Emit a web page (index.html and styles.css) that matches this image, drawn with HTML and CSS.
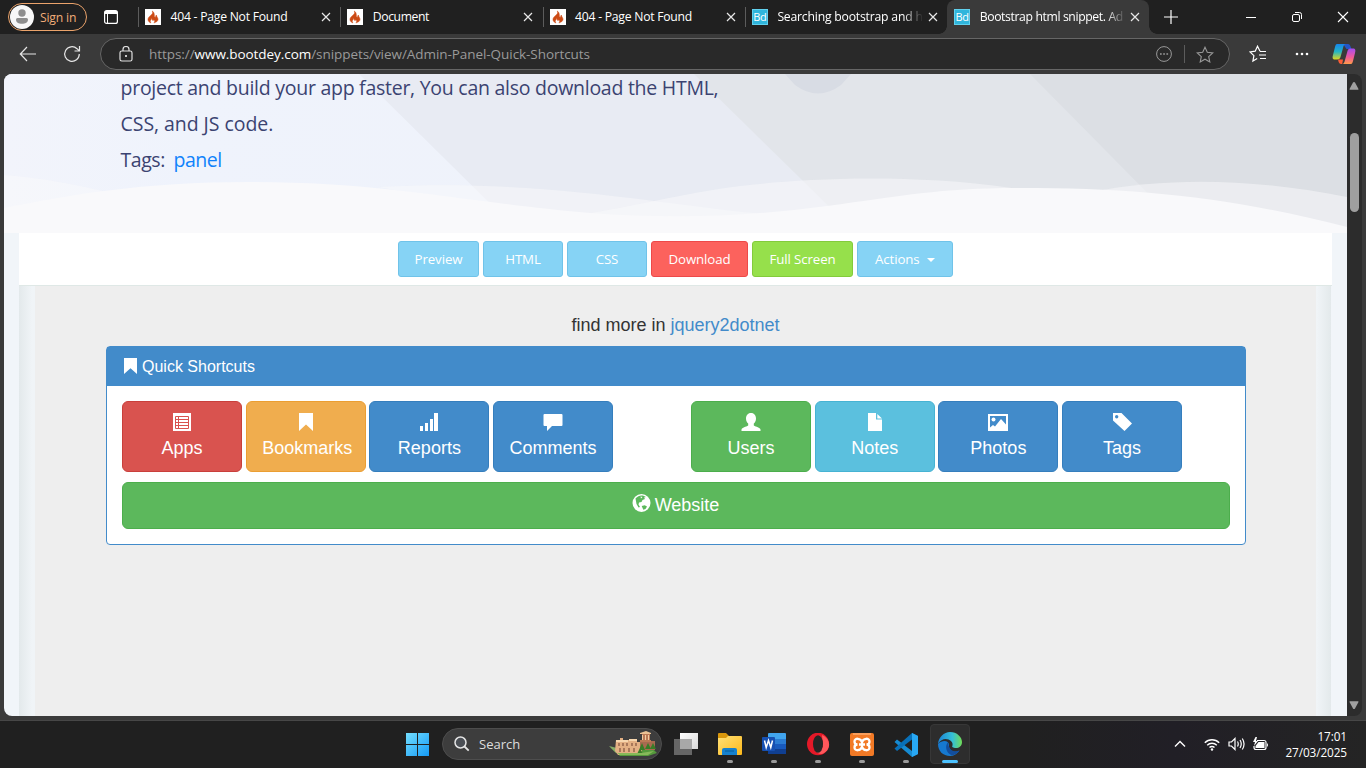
FILE: index.html
```html
<!DOCTYPE html>
<html lang="en">
<head>
<meta charset="utf-8">
<title>Bootstrap html snippet. Admin Panel Quick Shortcuts</title>
<link rel="stylesheet" href="styles.css">
</head>
<body>
<svg class="defs" width="0" height="0">
  <symbol id="flame" viewBox="0 0 16 16"><rect width="16" height="16" fill="#fff"/><path d="M7.300 2c.8 1.800.2 3-1.400 4.200C4 7.700 2.700 9.300 3 11c.3 1.500 1.500 2.500 3 2.900-.8-.8-1-2-.2-2.900.5-.6.700-1 .7-1.700.9.800.6 1.700 1.100 2.100.6.400 1.300-.2 1.100-1 1.200 1 1.300 2.500.2 3.500 2-.4 3.900-1.600 4.100-3.300.2-1.600-1.300-2.600-1.700-4.600-.6.600-.5 1.500-.7 1.900-.4.500-1.100.3-1.200-.4C9.200 5.600 9.700 3.600 7.300 2z" fill="#cc4a14" stroke="#cc4a14" stroke-width=".5"/></symbol>
  <symbol id="close" viewBox="0 0 10 10"><path d="M1 1l8 8M9 1L1 9" stroke="#e8e8e8" stroke-width="1.200"/></symbol>
  <symbol id="bookmark" viewBox="0 0 14 18"><path d="M0 0h14v18l-7-6.500L0 18z" fill="#fff"/></symbol>
</svg>

<header class="tabs">
  <div class="profile"><svg width="24" height="24" viewBox="0 0 24 24"><circle cx="12" cy="12" r="12" fill="#f7f7f7"/><circle cx="12" cy="8" r="3.700" fill="#8d8d8d"/><path d="M6 14.500q0-1.500 1.500-1.500h9q1.500 0 1.500 1.500c0 3-2.700 4.300-6 4.300s-6-1.300-6-4.300z" fill="#8d8d8d"/></svg><span>Sign in</span></div>
  <svg class="tab-actions" width="16" height="16" viewBox="0 0 16 16"><rect x="1.600" y="1.600" width="12.800" height="12.800" rx="2" fill="none" stroke="#fff" stroke-width="1.200"/><path d="M2 2h12v3H2z" fill="#fff"/><path d="M4.500 4v10" stroke="#fff"/></svg>
  <div class="tab"><svg class="fav"><use href="#flame"/></svg><span class="title t404">404 - Page Not Found</span><svg class="x"><use href="#close"/></svg></div>
  <div class="tab"><svg class="fav"><use href="#flame"/></svg><span class="title tdoc">Document</span><svg class="x"><use href="#close"/></svg></div>
  <div class="tab"><svg class="fav"><use href="#flame"/></svg><span class="title t404">404 - Page Not Found</span><svg class="x"><use href="#close"/></svg></div>
  <div class="tab"><b class="fav bd">Bd</b><span class="title fade">Searching bootstrap and h</span><svg class="x"><use href="#close"/></svg></div>
  <div class="tab active"><b class="fav bd">Bd</b><span class="title fade last">Bootstrap html snippet. Ad</span><svg class="x"><use href="#close"/></svg></div>
  <svg class="plus" width="16" height="16" viewBox="0 0 16 16"><path d="M8 1v14M1 8h14" stroke="#fff" stroke-width="1.200"/></svg>
  <div class="window">
    <svg width="12" height="12" viewBox="0 0 12 12"><path d="M1 6.500h10" stroke="#fff"/></svg>
    <svg width="12" height="12" viewBox="0 0 12 12"><rect x="1.500" y="3.500" width="7" height="7" rx="1.500" fill="none" stroke="#fff"/><path d="M4 1.500h4.500a2 2 0 0 1 2 2V8" fill="none" stroke="#fff"/></svg>
    <svg width="12" height="12" viewBox="0 0 12 12"><path d="M1 1l10 10M11 1L1 11" stroke="#fff" stroke-width="1.100"/></svg>
  </div>
</header>

<nav class="toolbar">
  <svg class="back" width="18" height="16" viewBox="0 0 18 16"><path d="M17 8H1.500M8 1L1.300 8 8 15" fill="none" stroke="#e6e6e6" stroke-width="1.200"/></svg>
  <svg class="reload" width="18" height="18" viewBox="0 0 18 18"><path d="M16.300 9A7.300 7.300 0 1 1 14 3.700l2 2M16.500 1v5H11.500" fill="none" stroke="#e6e6e6" stroke-width="1.200"/></svg>
  <div class="address">
    <svg width="14" height="16" viewBox="0 0 14 16"><rect x="1" y="5" width="12" height="10" rx="1.800" fill="none" stroke="#e0e0e0" stroke-width="1.200"/><path d="M4 5V3.500a3 3 0 0 1 6 0V5" fill="none" stroke="#e0e0e0" stroke-width="1.200"/><circle cx="7" cy="10" r="1" fill="#fff"/></svg>
    <span class="url">https://<em>www.bootdey.com</em>/snippets/view/Admin-Panel-Quick-Shortcuts</span>
    <svg class="dots" width="16" height="16" viewBox="0 0 16 16"><circle cx="8" cy="8" r="7.400" fill="none" stroke="#999"/><path d="M4 7.300h1.700v1.500H4zM7.200 7.300h1.700v1.500H7.200zM10.400 7.300h1.700v1.500h-1.700z" fill="#999"/></svg>
    <i></i>
    <svg width="18" height="17" viewBox="0 0 18 17"><path d="M9 1.200l2.300 5 5.500.7-4.100 3.700 1.100 5.300L9 13.200l-4.800 2.700 1.100-5.300-4.100-3.700 5.500-.7z" fill="none" stroke="#999" stroke-width="1.100"/></svg>
  </div>
  <svg class="favs" width="18" height="18" viewBox="0 0 18 18"><path d="M11 6.300L8.500 1.200l-2.300 5-5.200.700 3.900 3.700-1 5.500 4.300-2.500M11 6.500h6M10 10h7M11 13.500h6" fill="none" stroke="#fff" stroke-width="1.200"/></svg>
  <svg class="more" width="14" height="4" viewBox="0 0 14 4"><circle cx="2" cy="2" r="1.300" fill="#fff"/><circle cx="7" cy="2" r="1.300" fill="#fff"/><circle cx="12" cy="2" r="1.300" fill="#fff"/></svg>
  <svg class="copilot" width="24" height="22" viewBox="0 0 24 22">
    <defs><linearGradient id="cp1" x1="0" y1="0" x2="0" y2="1"><stop offset="0" stop-color="#1685ed"/><stop offset=".5" stop-color="#25b5c3"/><stop offset="1" stop-color="#e2d51d"/></linearGradient><linearGradient id="cp2" x1="0" y1="0" x2="0" y2="1"><stop offset="0" stop-color="#a44cf0"/><stop offset=".55" stop-color="#ef599b"/><stop offset="1" stop-color="#ff9b48"/></linearGradient></defs>
    <path d="M11 1h5c1.500 0 2 1 2.500 2.500L19.500 6h-5z" fill="#2456c8"/><path d="M5 1h9c-2 0-2.500 2-3 4L8.500 14c-.5 1.500-1.200 2.500-3 2.500H3C.5 16.500.2 14.500 1 12L3 4c.5-2 1-3 2-3z" fill="url(#cp1)"/>
    <path d="M6 16.500h5l-.8 4.500H9c-1.500 0-2-1-2.500-2.500z" fill="#fc5d37"/><path d="M19 21h-9c2 0 2.500-2 3-4l2.500-9c.5-1.500 1.200-2.500 3-2.500H21c2.500 0 2.800 2 2 4.500L21 18c-.5 2-1 3-2 3z" fill="url(#cp2)"/>
  </svg>
</nav>

<main class="viewport">
  <section class="page">
    <div class="hero">
      <svg class="hero-bg" width="1343" height="160" viewBox="4 74 1343 160">
        <defs><linearGradient id="h1"><stop offset="0" stop-color="#f2f4fb"/><stop offset=".14" stop-color="#eff3fc"/><stop offset="1" stop-color="#eff1f7"/></linearGradient></defs>
        <path d="M4 74h1343v160H4z" fill="url(#h1)"/>
        <path d="M359 74h988v160H521z" fill="#e8ebf3"/>
        <path d="M694 74h653v160H857z" fill="#e2e5ea"/>
        <path d="M1030 74h317v160h-159z" fill="#dcdfe4"/>
        <path d="M785 74l10 11q23 17 46 0l10-11z" fill="#d8dce4"/>
        <path d="M4 175C45 178 75 185 108 192L140 215 4 230z" fill="#f9f9fb" fill-opacity=".5"/>
        <path d="M378 187C480 182 560 189 654 201S730 211 790 216L590 225z" fill="#f9f9fb" fill-opacity=".5"/>
        <path d="M580 215C650 203 690 192 740 186S900 172 1012 188L1019 230H580z" fill="#f9f9fb" fill-opacity=".5"/>
        <path d="M1090 192C1170 177 1250 178 1347 197v36h-243z" fill="#f9f9fb" fill-opacity=".5"/>
        <path d="M4 208C70 195 140 182 250 182c140 0 210 20 340 31 80 6 155 4 237-7 75-10 112-18 192-18 120 0 210 9 328 39v7H4z" fill="#f9f9fb"/>
      </svg>
      <div class="hero-text">
        <p class="l1">project and build your app faster, You can also download the HTML,</p>
        <p class="l2">CSS, and JS code.</p>
        <p class="l3">Tags: <a>panel</a></p>
      </div>
    </div>
    <div class="snippet">
      <div class="btnbar">
        <span class="w81">Preview</span><span class="w80">HTML</span><span class="w80">CSS</span><span class="w97 red">Download</span><span class="w101 lime">Full Screen</span><span class="w96">Actions <i class="caret"></i></span>
      </div>
      <div class="preview">
        <div class="frame">
          <h4>find more in <a>jquery2dotnet</a></h4>
          <div class="panel">
            <div class="panel-heading"><svg width="13" height="16" viewBox="0 0 14 18" preserveAspectRatio="none"><use href="#bookmark" width="14" height="18"/></svg><span>Quick Shortcuts</span></div>
            <div class="panel-body">
              <div class="row">
                <div class="col">
                  <div class="btn danger"><svg width="18" height="18" viewBox="0 0 18 18"><path d="M0 0h18v18H0z" fill="#fff"/><path d="M2.500 3.500h13v12h-13zM2.500 6.500h13M2.500 9.500h13M2.500 12.500h13M5.500 3v13" stroke="#d9534f" fill="none"/></svg><span>Apps</span></div>
                  <div class="btn warning"><svg width="14" height="18"><use href="#bookmark"/></svg><span class="wide">Bookmarks</span></div>
                  <div class="btn primary"><svg width="18" height="18" viewBox="0 0 18 18"><path d="M0 13h3v5H0zM5 10h3v8H5zM10 6h3v12h-3zM14 0h4v18h-4z" fill="#fff"/></svg><span>Reports</span></div>
                  <div class="btn primary"><svg width="20" height="18" viewBox="0 0 20 18"><path d="M1.500 1h17q1 0 1 1v10q0 1-1 1H9l-5 5v-5H1.500q-1 0-1-1V2q0-1 1-1z" fill="#fff"/></svg><span>Comments</span></div>
                </div>
                <div class="col">
                  <div class="btn success"><svg width="20" height="18" viewBox="0 0 20 18"><path d="M10 0c3.300 0 5 2.500 5 5.500 0 2.500-1 4-2.200 5v2c2.200 1.300 6.200 2 6.700 4V18H.5v-1.500c.5-2 4.500-2.700 6.700-4v-2C6 9.500 5 8 5 5.500 5 2.500 6.700 0 10 0z" fill="#fff"/></svg><span>Users</span></div>
                  <div class="btn info"><svg width="14" height="18" viewBox="0 0 14 18"><path d="M0 0h8v6.500h6V18H0zM9.300 1l4.700 4.500H9.300z" fill="#fff"/></svg><span>Notes</span></div>
                  <div class="btn primary"><svg width="20" height="18" viewBox="0 0 20 18"><path fill-rule="evenodd" d="M0 1h20v17H0zM2 3v11.500l3-2.500 2 1.500L13 6l5 5.500V3z" fill="#fff"/><circle cx="5.500" cy="6.500" r="2" fill="#fff"/></svg><span>Photos</span></div>
                  <div class="btn primary"><svg width="19" height="18" viewBox="0 0 19 18"><path fill-rule="evenodd" d="M0 0h8.500L19 10.500 11.500 18 0 7.500zM3.700 2a1.700 1.700 0 1 0 0 3.400 1.700 1.700 0 0 0 0-3.400z" fill="#fff"/></svg><span>Tags</span></div>
                </div>
              </div>
              <div class="btn website success"><svg width="19" height="18" viewBox="0 0 19 18"><circle cx="9.500" cy="9" r="9" fill="#fff"/><path d="M3.500 4.500C6 1.500 9 1 11.500 1.700L14 3l-2 .5 1 1.500-2.500 1-1 2-2.500.500-.5 2 1.500 2.500-1.500.5-2-3.500z" fill="#5cb85c"/><path d="M9.700 12l3-.7 2.300 1.200-1.500 2.500-2.200.7z" fill="#5cb85c"/><path d="M8.500 2.500l2 .5-1.500 1.500z" fill="#fff"/></svg><span>Website</span></div>
            </div>
          </div>
        </div>
      </div>
    </div>
  </section>
  <aside class="scroll"><svg width="10" height="8" viewBox="0 0 10 8"><path d="M5 0q.7 0 1 .600L9.500 7q.2.800-.5.800H1Q.3 7.800.5 7L4 .600Q4.300 0 5 0z" fill="#a0a0a0"/></svg><b></b><svg class="down" width="10" height="8" viewBox="0 0 10 8"><path d="M5 8q-.7 0-1-.6L.5 1Q.3.200 1 .200h8q.7 0 .5.800L6 7.400Q5.700 8 5 8z" fill="#a0a0a0"/></svg></aside>
</main>

<footer class="taskbar">
  <svg class="start" width="23" height="23" viewBox="0 0 23 23"><defs><linearGradient id="win" x2="1" y2="1"><stop offset="0" stop-color="#73deff"/><stop offset="1" stop-color="#159af5"/></linearGradient></defs><path d="M0 0h11v11H0zM12 0h11v11H12zM0 12h11v11H0zM12 12h11v11H12z" fill="url(#win)"/></svg>
  <div class="search"><svg width="16" height="16" viewBox="0 0 16 16"><circle cx="6.500" cy="6.500" r="5.500" fill="#4b4f55" stroke="#e5e5e5" stroke-width="1.500"/><path d="M10.500 10.500L14.700 14.700" stroke="#e5e5e5" stroke-width="1.800"/></svg><span>Search</span>
    <svg width="48" height="26" viewBox="0 0 48 26">
      <path d="M1 16l7 2 15-1 22 2 3 3-9 3H11l-6-5z" fill="#559a3c"/><path d="M0 15l8 2-1 5z" fill="#86ab68"/>
      <path d="M7 9h4V7h3v2h6V8h8v3h5v13H9l-3-4z" fill="#e3b084"/><path d="M7 9h12v2H7zM20 8h8v2h-8z" fill="#f6d6ae"/>
      <path d="M10 12v3M14 12v3M18 12v3M23 12v3M27 12v3M11 17v4M15 17v4M20 17v4M25 17v4" stroke="#8a5b45" stroke-width="1.300"/>
      <path d="M31 10h15v9H31z" fill="#a86a50"/><path d="M33 2h8v8h-8zM31 9h11v2H31z" fill="#bb7a56"/><path d="M31 2l6-2 5 2v1H31z" fill="#ecc294"/><path d="M33.500 4v5M36.500 4v5M39.500 4v5" stroke="#f3cda2"/>
      <path d="M33 12l3 7h-6zM39 12l3 6h-6zM44 12l3 6h-6zM31 17l3 6h-6z" fill="#397c27"/><path d="M8 22h24l13-2-6 4H11z" fill="#87b95a"/>
    </svg></div>
  <div class="apps">
    <div class="app"><svg width="24" height="24" viewBox="0 0 24 24"><defs><linearGradient id="tv" x2="1" y2="1"><stop offset="0" stop-color="#fff"/><stop offset="1" stop-color="#d8d8d8"/></linearGradient></defs><path d="M6 0h18v16H6z" fill="url(#tv)"/><path d="M0 6h18v16H0z" fill="#666"/><path d="M6 6h12v10H6z" fill="#a8a8a8"/></svg></div>
    <div class="app run"><svg width="24" height="24" viewBox="0 0 24 24"><defs><linearGradient id="fo" x2="1" y2="1"><stop offset="0" stop-color="#ffe177"/><stop offset="1" stop-color="#fdb81a"/></linearGradient></defs><path d="M0 1q0-1 1-1h7l2.500 2.500V8H0z" fill="#d9970c"/><path d="M0 5h8l2-2h13q1 0 1 1v17q0 1-1 1H1q-1 0-1-1z" fill="url(#fo)"/><path d="M4 22v-5q0-2 2-2h11q2 0 2 2v5z" fill="#1681cd"/><path d="M7 18h9" stroke="#075c98"/></svg></div>
    <div class="app run"><svg width="24" height="24" viewBox="0 0 24 24"><path d="M7 0h16q1 0 1 1v5H6V1q0-1 1-1z" fill="#41a5ee"/><path d="M6 6h18v5H6z" fill="#2b7cd3"/><path d="M6 11h18v5H6z" fill="#185abd"/><path d="M6 16h18v5H6z" fill="#103f91"/><rect y="4" width="13" height="14" rx="1" fill="#1650b2"/><path d="M2.500 7.500l1.700 7 2.300-7 2.300 7 1.700-7" fill="none" stroke="#fff" stroke-width="1.500"/></svg></div>
    <div class="app run"><svg width="24" height="24" viewBox="0 0 24 24"><ellipse cx="12" cy="11" rx="11" ry="11.300" fill="#e41928"/><path d="M16 2c10 4 9 16 0 19-4 0-6-2-7-4l8-3z" fill="#ff575b"/><ellipse cx="12" cy="11" rx="5" ry="8.700" fill="#252525"/></svg></div>
    <div class="app run"><svg width="24" height="24" viewBox="0 0 24 24"><rect width="24" height="23" rx="2" fill="#f27a26"/><path d="M3 1h18" stroke="#ffc190"/><path d="M12 9.200C11 5 4.500 4.500 4.500 8.500c0 2 1.500 3 3 3-1.500 0-3 1-3 3 0 4 6.500 3.500 7.500-.7M12 9.200C13 5 19.500 4.500 19.500 8.500c0 2-1.500 3-3 3 1.500 0 3 1 3 3 0 4-6.500 3.500-7.500-.7M9 11.500h6M12 8.500v6" fill="none" stroke="#fff" stroke-width="2.300"/></svg></div>
    <div class="app run"><svg width="24" height="24" viewBox="0 0 24 24"><path d="M18 0l6 3v18l-6 3L.5 9l2.500-2.500L18 18z" fill="#168bd2"/><path d="M18 0v6.500L3 18 .5 15.500z" fill="#0870b8"/><path d="M18 0l6 3v18l-6 3z" fill="#28a8f4"/></svg></div>
    <div class="app run current"><svg width="24" height="24" viewBox="0 0 24 24"><defs><linearGradient id="eg"><stop offset="0" stop-color="#1a82d5"/><stop offset=".6" stop-color="#35c0d8"/><stop offset="1" stop-color="#70dc55"/></linearGradient></defs><path d="M0 12c0 7 5 12 12 12 4 0 7-2 9.500-5.500-6 3-11 0-10.500-5.500C11 9 5 7 0 12z" fill="#1679cf"/><path d="M0 12C.5 5 6 0 12 0c7 0 12 5 12 10 0 4-3 6-6 6-3 0-4.500-1-3.500-2.500C16 8 5 3 0 12z" fill="url(#eg)"/><path d="M10 10c-3.500 4-2 11 4 13.500 3-.5 6-2.500 7.500-5-6 2.500-11.500-1-11.500-8.500z" fill="#134e9d"/></svg></div>
  </div>
  <div class="tray">
    <svg width="12" height="8" viewBox="0 0 12 8"><path d="M1 6.500l5-5 5 5" fill="none" stroke="#fff" stroke-width="1.400"/></svg>
    <svg class="wifi" width="16" height="13" viewBox="0 0 16 13"><path d="M.8 4.800a10.200 10.200 0 0 1 14.400 0M3.200 7.300a6.800 6.800 0 0 1 9.600 0M5.500 9.600a3.500 3.500 0 0 1 5 0" fill="none" stroke="#fff" stroke-width="1.400"/><circle cx="8" cy="11.500" r="1.200" fill="#fff"/></svg>
    <svg class="volume" width="17" height="14" viewBox="0 0 17 14"><path d="M1 5h2.500L7 1.500v11L3.500 9H1zM9.500 4.500q1.500 2.500 0 5M12 3q2.500 4 0 8M14.300 1.500q3.500 5.500 0 11" fill="none" stroke="#fff" stroke-width="1.200"/></svg>
    <svg class="battery" width="17" height="14" viewBox="0 0 17 14"><path d="M5 3.500h7q2 0 2 2v5q0 2-2 2H4q-2 0-2-2V9" fill="none" stroke="#fff" stroke-width="1.200"/><path d="M6.500 5h6v6H3.500V9zM15 6q2 2 0 4z" fill="#fff"/><path d="M3.500 0L1 5h2L2 9l4-5H4l1-4z" fill="#fff"/></svg>
    <div class="clock"><span>17:01</span><span>27/03/2025</span></div>
  </div>
</footer>
</body>
</html>
```
FILE: styles.css
```css
* { box-sizing: border-box; }
body { margin: 0; width: 1366px; height: 768px; overflow: hidden; display: flex; flex-direction: column; background: #3a3a3a; font-family: "Open Sans", "Noto Sans", sans-serif; color: #fff; }
svg { display: block; flex: none; }
.defs { position: absolute; }
.tabs { height: 34px; flex: none; display: flex; align-items: center; background: #202020; }
.profile { width: 79px; height: 28px; margin-left: 8px; border: 1px solid #eba36b; border-radius: 14px; display: flex; align-items: center; padding-left: 1px; gap: 6px; color: #f1ad79; font-size: 12.200px; letter-spacing: -.2px; white-space: nowrap; }
.tab-actions { margin: 0 19px 0 16px; }
.tab { width: 202.300px; height: 34px; flex: none; display: flex; align-items: center; padding-left: 7px; position: relative; }
.tab::before { content: ""; width: 1px; height: 20px; background: #5c5c5c; position: absolute; left: 0; top: 7px; }
.tab.active { background: #3a3a3a; border-radius: 8px 8px 0 0; }
.tab.active::before { display: none; }
.tab.active::after { content: ""; position: absolute; left: -8px; right: -8px; bottom: 0; height: 8px; background: radial-gradient(circle at 0 0, transparent 7.500px, #3a3a3a 8px) left / 8px 8px no-repeat, radial-gradient(circle at 100% 0, transparent 7.500px, #3a3a3a 8px) right / 8px 8px no-repeat; }
.fav { width: 16px; height: 16px; flex: none; }
.bd { background: #2fb5dc; border: 1px solid #61d0ed; font: 11px/14px "Open Sans", sans-serif; text-align: center; letter-spacing: -.2px; }
.title { width: 145px; flex: none; margin-left: 9.500px; font-size: 12.200px; line-height: 18px; white-space: nowrap; }
.t404 { letter-spacing: -.25px; }
.tdoc { letter-spacing: -.4px; }
.fade { letter-spacing: -.2px; -webkit-mask: linear-gradient(90deg, #000 126px, transparent 146px); mask: linear-gradient(90deg, #000 126px, transparent 146px); }
.last { letter-spacing: -.37px; }
.x { width: 10px; height: 10px; margin-left: 5.500px; }
.plus { margin-left: 14px; }
.window { margin-left: auto; display: flex; gap: 34px; padding-right: 17px; }

.toolbar { height: 40px; flex: none; display: flex; align-items: center; }
.back { margin-left: 19px; }
.reload { margin: 0 19px 0 26px; }
.address { width: 1130px; height: 32px; border: 1px solid #666; border-radius: 16px; background: #292929; display: flex; align-items: center; padding: 0 15px 0 18px; }
.url { margin-left: 16px; font-size: 13.500px; letter-spacing: -.06px; color: #9a9a9a; white-space: nowrap; }
.url em { font-style: normal; color: #fff; }
.dots { margin-left: auto; }
.address i { width: 1px; height: 18px; background: #5c5c5c; margin: 0 11px 0 12px; }
.favs { margin-left: 19px; }
.more { margin-left: 28px; }
.copilot { margin-left: 23px; }

.viewport { height: 642px; flex: none; margin: 0 4px; border-radius: 8px; overflow: hidden; display: flex; }
.page { width: 1343px; background: #f1f5f9; }
.hero { height: 159px; display: grid; overflow: hidden; }
.hero-bg, .hero-text { grid-area: 1 / 1; }
.hero-text { position: relative; padding-left: 116.500px; margin-top: -4px; }
.hero-text p { margin: 0; font-size: 19.500px; line-height: 36px; letter-spacing: -.26px; color: #3b4371; white-space: nowrap; }
.hero-text .l2 { letter-spacing: -.05px; }
.hero-text .l3 { letter-spacing: -.45px; }
.hero-text a { color: #0f82fb; margin-left: 4px; }
.snippet { width: 1313px; margin-left: 15px; }
.btnbar { height: 53px; background: #fff; border-bottom: 1px solid #dfe8e6; display: flex; justify-content: center; padding-top: 8px; gap: 4px; }
.btnbar span { height: 36px; border: 1px solid #70c3e9; border-radius: 3px; background: #86d3f5; font-size: 13.300px; line-height: 34px; letter-spacing: -.12px; text-align: center; white-space: nowrap; }
.btnbar .red { background: #fc625d; border-color: #ed4949; }
.btnbar .lime { background: #96e04b; border-color: #83cb3b; }
.w81 { width: 81px; } .w80 { width: 80px; } .w97 { width: 97px; } .w101 { width: 101px; } .w96 { width: 96px; }
.caret { display: inline-block; border: 4px solid transparent; border-top-color: #fff; border-bottom: 0; margin-left: 4px; vertical-align: 2px; }
.preview { height: 430px; padding: 0 16px; margin: 0 1px 0 0; background: linear-gradient(90deg, #e3e9eb, #f0f4f7 13px, #f0f4f7 1298px, #e3e9eb); }
.frame { height: 430px; width: 1281px; background: #eee; padding: 29px 71px 0; font-family: "Liberation Sans", Arial, sans-serif; }
h4 { margin: 0 0 11px; font-size: 18px; line-height: 20px; font-weight: 400; text-align: center; color: #333; }
h4 a { color: #428bca; }
.panel { width: 1140px; height: 199px; background: #fff; border: 1px solid #428bca; border-radius: 4px; }
.panel-heading { height: 39px; background: #428bca; display: flex; align-items: center; padding-left: 17px; gap: 5px; font-size: 16px; }
.panel-heading svg { margin-top: -2px; }
.panel-body { padding: 15px; }
.row { display: flex; }
.col { width: 569px; flex: none; display: flex; gap: 3.700px; }
.btn { width: 120px; height: 71px; border: 1px solid; border-radius: 6px; display: flex; flex-direction: column; align-items: center; padding-top: 11px; font-size: 18px; line-height: 24px; white-space: nowrap; }
.btn span { margin-top: 5px; }
.btn .wide { margin-left: 3px; }
.danger { background: #d9534f; border-color: #c93f3b; }
.warning { background: #f0ad4e; border-color: #eb9e32; }
.primary { background: #428bca; border-color: #357ebd; }
.success { background: #5cb85c; border-color: #4cae4c; }
.info { background: #5bc0de; border-color: #46b3d3; }
.website { width: 1108px; height: 47px; margin-top: 10px; flex-direction: row; justify-content: center; gap: 4px; align-items: flex-start; padding-right: 1px; }
.website span { margin-top: -1px; }
.scroll { width: 15px; background: #2c2c2c; display: flex; flex-direction: column; padding: 8px 0 7px 2px; }
.scroll b { width: 9px; height: 79px; border-radius: 5px; background: #9f9f9f; margin: 43px 0 0 1px; }
.scroll .down { margin-top: auto; }

.taskbar { height: 48px; margin-top: auto; border-top: 1px solid #474747; padding-bottom: 1px; background: linear-gradient(90deg, #202020 75%, #211f26 86%, #242424); display: flex; align-items: center; }
.start { margin-left: 406px; }
.search { width: 220px; height: 32px; margin-left: 13px; border-radius: 16px; background: #3d3d3d; border: 1px solid #4d4d4d; display: flex; align-items: center; padding: 0 4px 0 11px; font-size: 13px; color: #ddd; }
.search span { margin-left: 9px; margin-right: auto; }
.apps { display: flex; gap: 4px; margin-left: 4px; }
.app { width: 40px; height: 40px; border-radius: 4px; display: flex; justify-content: center; padding-top: 9px; position: relative; }
.run::after { content: ""; position: absolute; width: 6px; height: 3px; border-radius: 2px; background: #9b9b9b; left: 17px; bottom: 1px; }
.current { background: #2d2d2d; border: 1px solid #373737; padding-top: 7px; }
.current::after { width: 16px; left: 11px; bottom: 0; background: #4cc2ff; }
.tray { margin-left: auto; display: flex; align-items: center; padding-right: 19px; }
.wifi { margin-left: 18px; }
.volume { margin-left: 8px; }
.battery { margin-left: 7px; }
.clock { width: 64px; margin-left: 14px; display: flex; flex-direction: column; align-items: flex-end; font-size: 11.800px; line-height: 16px; letter-spacing: -.1px; white-space: nowrap; }
```
